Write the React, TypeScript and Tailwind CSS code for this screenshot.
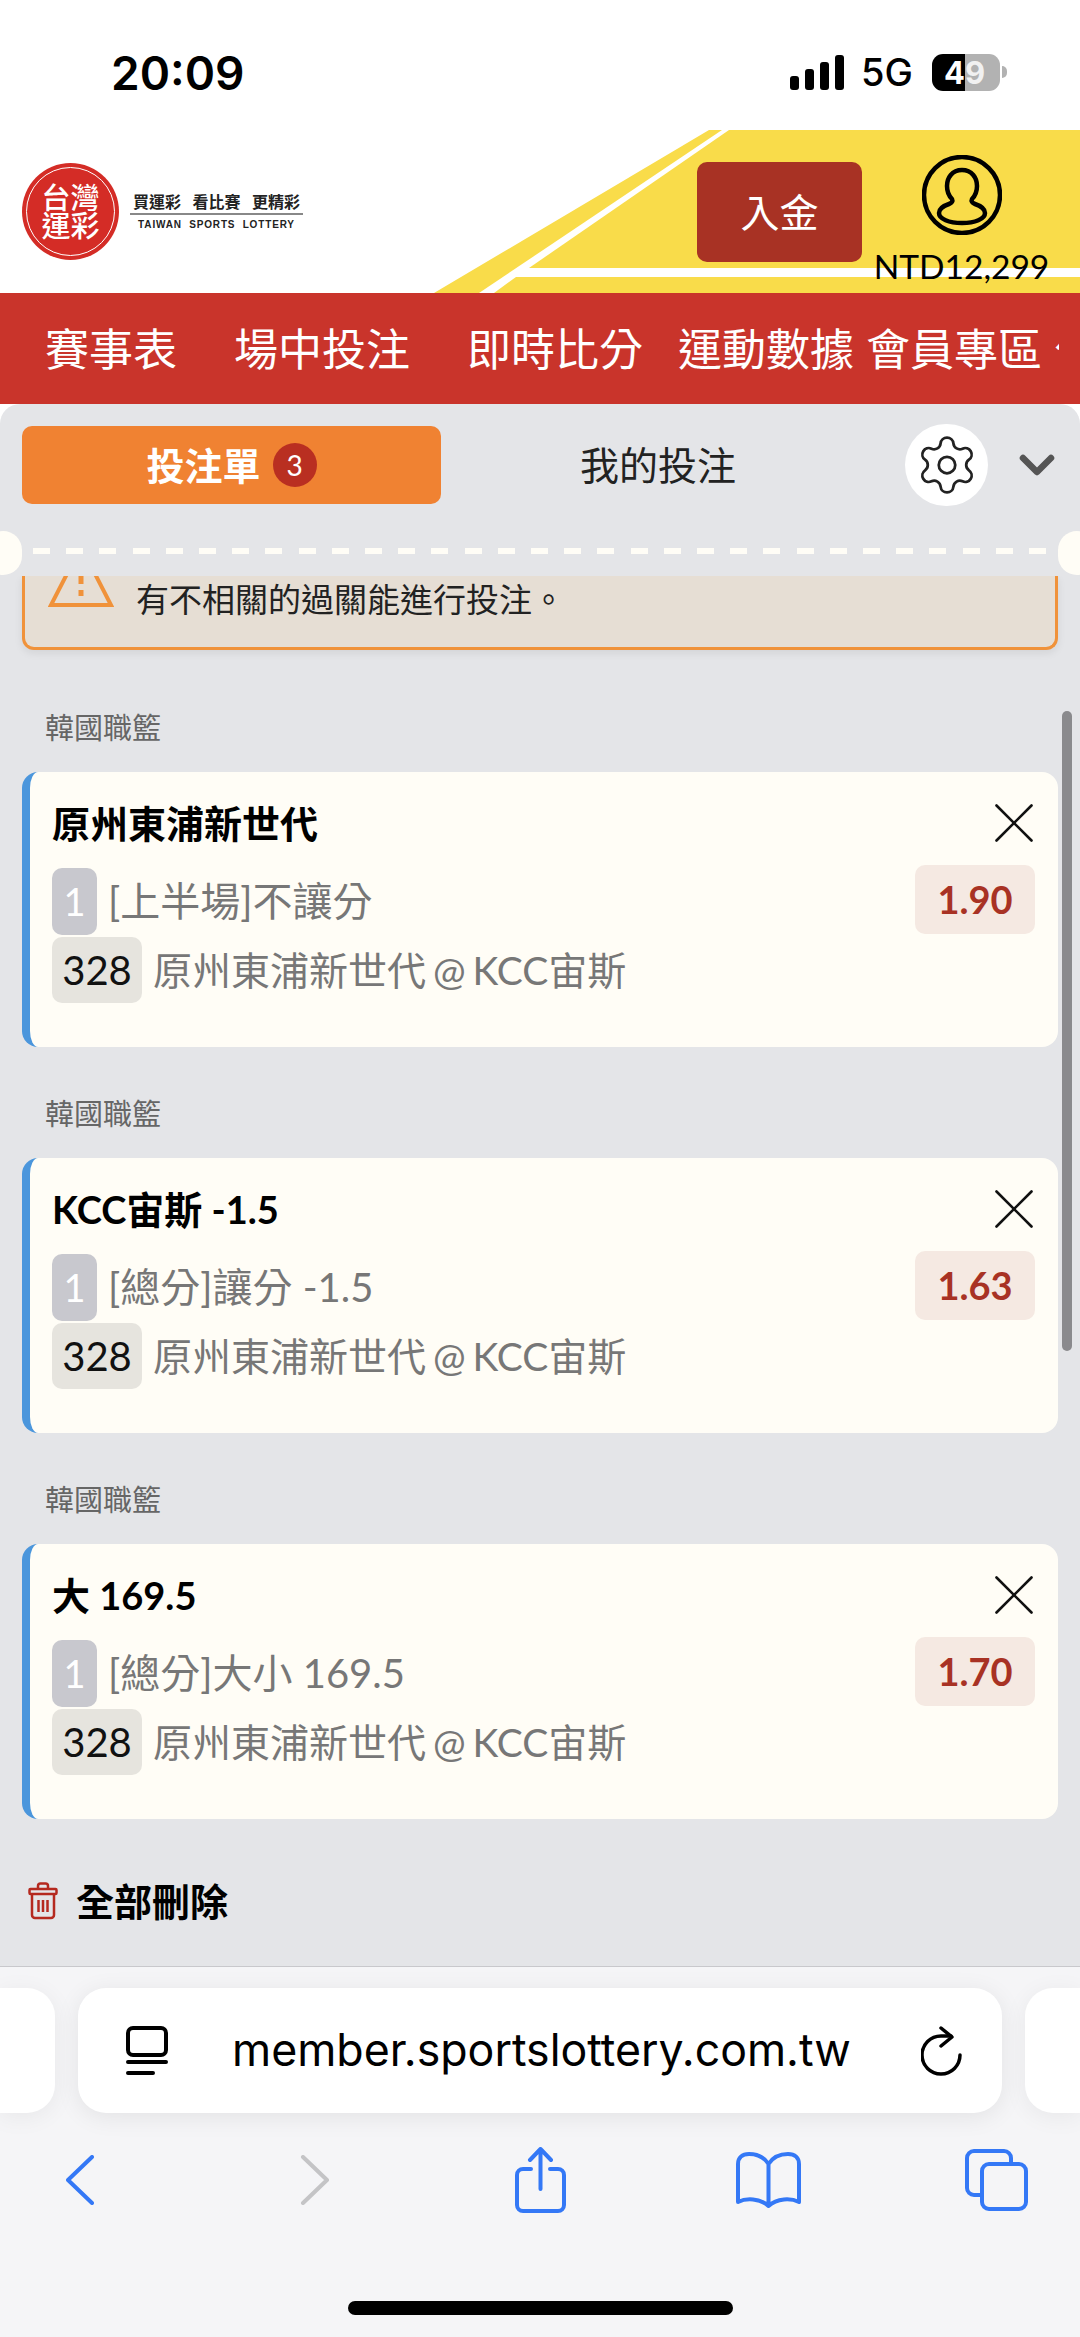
import { ChevronDown, Settings, X } from "lucide-react";

const bets = [
  { title: "原州東浦新世代", market: "[上半場]不讓分", odds: "1.90" },
  { title: "KCC宙斯 -1.5", market: "[總分]讓分 -1.5", odds: "1.63" },
  { title: "大 169.5", market: "[總分]大小 169.5", odds: "1.70" },
];

function StatusBar() {
  return (
    <div className="relative flex h-[130px] items-start bg-white pt-[46px]">
      <span className="ml-[111px] text-[46px] leading-[54px] font-semibold text-black [font-family:Inter,sans-serif]">
        20:09
      </span>
      <div className="ml-auto mr-[73px] flex items-center pt-[7px]">
        <div className="flex items-end gap-[6px]">
          <div className="h-[14px] w-[9px] rounded-[3px] bg-black" />
          <div className="h-[21px] w-[9px] rounded-[3px] bg-black" />
          <div className="h-[28px] w-[9px] rounded-[3px] bg-black" />
          <div className="h-[35px] w-[9px] rounded-[3px] bg-black" />
        </div>
        <span className="ml-[17px] text-[38px] leading-[38px] font-medium text-black [font-family:Inter,sans-serif]">
          5G
        </span>
        <div className="ml-[19px] flex h-[37px] w-[68px] overflow-hidden rounded-[11px] text-[31px] leading-[37px] font-bold text-white [font-family:Inter,sans-serif]">
          <div className="w-[33px] bg-black pl-[12px]">4</div>
          <div className="w-[35px] bg-[#b2b2b2] text-[#f1f1f1]">9</div>
        </div>
        <div className="ml-[2px] h-[12px] w-[5px] rounded-r-full bg-[#b2b2b2]" />
      </div>
    </div>
  );
}

function Logo() {
  return (
    <div className="flex items-center">
      <div className="flex h-[97px] w-[97px] items-center justify-center rounded-full bg-[#d42c26] p-[4px]">
        <div className="flex h-full w-full flex-col items-center justify-center rounded-full border border-white text-[29px] leading-[28px] font-medium text-white">
          <span>台灣</span>
          <span>運彩</span>
        </div>
      </div>
      <div className="ml-[11px] flex w-[173px] flex-col items-center text-[#222]">
        <span className="flex w-full justify-between px-[3px] text-[16px] leading-[22px] font-bold">
          <span>買運彩</span>
          <span>看比賽</span>
          <span>更精彩</span>
        </span>
        <div className="h-[2px] w-full bg-[#888]" />
        <span className="mt-[3px] text-[10px] leading-[14px] font-bold tracking-[0.85px] whitespace-pre [font-family:'Liberation_Sans',sans-serif]">
          TAIWAN  SPORTS  LOTTERY
        </span>
      </div>
    </div>
  );
}

function Header() {
  return (
    <div className="relative flex h-[163px] bg-white pl-[22px]">
      <svg className="absolute inset-0" width="1080" height="163" viewBox="0 0 1080 163">
        <polygon points="709,0 722,0 479,163 434,163" fill="#f9dc4a" />
        <polygon points="729,0 1080,0 1080,138 529,138" fill="#f9dc4a" />
        <polygon points="516,147 1080,147 1080,163 494,163" fill="#f9dc4a" />
      </svg>
      <div className="relative mt-[33px] self-start">
        <Logo />
      </div>
      <div className="relative ml-auto mr-[33px] flex items-start pt-[32px]">
        <div className="flex h-[100px] w-[165px] items-center justify-center rounded-[10px] bg-[#a83224] text-[39px] text-white">
          入金
        </div>
        <div className="ml-[14px] -mt-[7px] flex w-[171px] flex-col items-center">
          <svg width="80" height="80" viewBox="0 0 80 80" fill="none" stroke="#000" strokeWidth="4.5">
            <circle cx="40" cy="40" r="38" />
            <path d="M40 15c-10 0-15 8-15 16 0 6 2 10 5 13 1 2 0 4-3 5-6 2-10 5-10 9 0 6 10 10 23 10s23-4 23-10c0-4-4-7-10-9-3-1-4-3-3-5 3-3 5-7 5-13 0-8-5-16-15-16z" />
          </svg>
          <span className="mt-[11px] text-[33.500px] leading-[40px] text-black">NTD12,299</span>
        </div>
      </div>
    </div>
  );
}

function Nav() {
  return (
    <div className="flex h-[111px] items-center overflow-hidden bg-[#c9342b] pl-[45px] text-[44px] whitespace-nowrap text-white">
      <span className="w-[189px] shrink-0">賽事表</span>
      <span className="w-[233px] shrink-0">場中投注</span>
      <span className="w-[211px] shrink-0">即時比分</span>
      <span className="w-[188px] shrink-0">運動數據</span>
      <span className="w-[188px] shrink-0">會員專區</span>
      <span className="w-[5px] shrink-0 overflow-hidden">公告</span>
    </div>
  );
}

function BetCard({ title, market, odds }: { title: string; market: string; odds: string }) {
  return (
    <div className="mt-[26px] h-[275px] rounded-[16px] border-l-[8px] border-[#4b96dc] bg-[#fffdf6] pt-[30px] pl-[22px] pr-[23px]">
      <div className="flex h-[42px] items-center justify-between">
        <span className="text-[38px] leading-[42px] font-bold text-black">{title}</span>
        <X className="-my-[14px] -mr-[14px] h-[70px] w-[70px]" strokeWidth={0.9} color="#111" />
      </div>
      <div className="mt-[23px] flex items-start">
        <span className="mt-[1px] flex h-[67px] w-[45px] items-center justify-center rounded-[10px] bg-[#c8c8ce] text-[38px] text-white">1</span>
        <span className="mt-[6px] ml-[11px] text-[40px] leading-[56px] text-[#777]">{market}</span>
        <span className="ml-auto -mt-[2px] flex h-[69px] w-[120px] items-center justify-center rounded-[10px] bg-[#f5e9e2] text-[38px] font-bold text-[#a83224]">
          {odds}
        </span>
      </div>
      <div className="mt-[2px] flex items-center">
        <span className="flex h-[66px] w-[90px] items-center justify-center rounded-[10px] bg-[#e6e4de] text-[40px] text-[#111]">328</span>
        <span className="ml-[11px] text-[39px] leading-[56px] text-[#777] [word-spacing:-3px]">原州東浦新世代 @ KCC宙斯</span>
      </div>
    </div>
  );
}

function BetSlipTop() {
  return (
    <div className="relative z-10 h-[172px] shrink-0 rounded-t-[20px] bg-[#e4e5e8]">
      <div className="flex items-center pt-[20px] pl-[22px]">
        <div className="flex h-[78px] w-[419px] items-center justify-center rounded-[10px] bg-[#f08232] text-[38px] font-bold text-white">
          投注單
          <span className="ml-[12px] flex h-[44px] w-[44px] items-center justify-center rounded-full bg-[#b92f21] text-[28px] font-normal">3</span>
        </div>
        <span className="ml-[139px] text-[39px] text-[#222]">我的投注</span>
        <div className="ml-[169px] flex h-[82px] w-[83px] items-center justify-center rounded-full bg-white">
          <Settings className="h-[66px] w-[66px] shrink-0" strokeWidth={1} color="#222" />
        </div>
        <ChevronDown className="ml-[21px] h-[56px] w-[56px] shrink-0" strokeWidth={2.8} color="#555" />
      </div>
      <div className="absolute top-[127px] left-[-16px] h-[44px] w-[38px] rounded-full bg-[#fffdf6]" />
      <div className="absolute top-[127px] right-[-16px] h-[44px] w-[38px] rounded-full bg-[#fffdf6]" />
      <div className="absolute top-[144px] left-[33px] right-[33px] h-[6px] bg-[repeating-linear-gradient(90deg,#fffdf6_0,#fffdf6_17px,transparent_17px,transparent_33.2px)]" />
    </div>
  );
}

function BetSlipBody() {
  return (
    <div className="relative flex-1 overflow-hidden bg-[#e4e5e8] px-[22px]">
      <div className="absolute top-[135px] right-[8px] h-[640px] w-[10px] rounded-full bg-[#8a8a8d]" />
      <div className="flex h-[74px] rounded-b-[12px] border-x-[3px] border-b-[3px] border-[#f0923a] bg-[#e6ded4] pl-[23px] shadow-[0_3px_8px_rgba(0,0,0,0.08)]">
        <svg width="66" height="31" viewBox="0 0 66 31" fill="none" stroke="#f0923a" strokeWidth="4">
          <path d="M21 -6 L3 29 H63 L45 -6" />
          <path d="M33 0 V8 M33 14 V20" strokeWidth="5" />
        </svg>
        <span className="ml-[22px] mt-[1px] text-[33px] leading-[44px] text-[#222]">有不相關的過關能進行投注。</span>
      </div>
      <div className="mt-[60px]">
        {bets.map((bet, i) => (
          <div key={i} className={i > 0 ? "mt-[49px]" : ""}>
            <div className="pl-[23px] text-[29px] leading-[36px] text-[#666]">韓國職籃</div>
            <BetCard {...bet} />
          </div>
        ))}
      </div>
      <div className="mt-[60px] flex items-center pl-[6px]">
        <svg width="30" height="38" viewBox="0 0 30 38" fill="none" stroke="#b5291f" strokeWidth="2.500" strokeLinejoin="round">
          <path d="M10 7V4a2.500 2.500 0 0 1 2.500-2.500h5A2.500 2.500 0 0 1 20 4v3" />
          <rect x="1.500" y="7" width="27" height="5" rx="1" />
          <path d="M4 12v21a3 3 0 0 0 3 3h16a3 3 0 0 0 3-3V12" />
          <path d="M10.500 18v12M15 18v12M19.500 18v12" />
        </svg>
        <span className="ml-[18px] text-[38px] leading-[44px] font-bold text-black">全部刪除</span>
      </div>
    </div>
  );
}

function SafariBar() {
  return (
    <div className="h-[371px] shrink-0 border-t border-[#c8c8cc] bg-[#f5f5f7]">
      <div className="mt-[21px] flex h-[125px] items-stretch">
        <div className="w-[55px] shrink-0 rounded-r-[28px] bg-white shadow-[0_4px_24px_rgba(0,0,0,0.06)]" />
        <div className="ml-[23px] flex w-[924px] shrink-0 items-center rounded-[28px] bg-white pl-[48px] shadow-[0_4px_24px_rgba(0,0,0,0.08)]">
          <svg width="42" height="50" viewBox="0 0 42 50" fill="none" stroke="#000" strokeWidth="4" strokeLinecap="round">
            <rect x="2" y="2" width="38" height="27" rx="5" />
            <path d="M2 36H40M2 47H27" />
          </svg>
          <span className="ml-[64px] w-[689px] shrink-0 text-[44.700px] whitespace-nowrap text-black [font-family:Inter,sans-serif]">
            member.sportslottery.com.tw
          </span>
          <svg width="42" height="50" viewBox="0 0 42 50" fill="none" stroke="#000" strokeWidth="3.500" strokeLinecap="round" strokeLinejoin="round">
            <path d="M39 29A19 19 0 1 1 20 10H30" />
            <path d="M20 2l11 9-11 9" />
          </svg>
        </div>
        <div className="ml-[23px] flex-1 rounded-l-[28px] bg-white shadow-[0_4px_24px_rgba(0,0,0,0.06)]" />
      </div>
      <div className="mt-[34px] flex h-[66px] items-center pl-[66px]">
        <svg width="28" height="50" viewBox="0 0 28 50" fill="none" stroke="#3478f6" strokeWidth="4" strokeLinecap="round" strokeLinejoin="round">
          <path d="M26 2L2 25l24 23" />
        </svg>
        <svg className="ml-[206px]" width="30" height="50" viewBox="0 0 30 50" fill="none" stroke="#c4c4c6" strokeWidth="4" strokeLinecap="round" strokeLinejoin="round">
          <path d="M3 2l24 23L3 48" />
        </svg>
        <svg className="ml-[185px]" width="51" height="66" viewBox="0 0 51 66" fill="none" stroke="#3478f6" strokeWidth="4" strokeLinecap="round" strokeLinejoin="round">
          <path d="M16 22H8a6 6 0 0 0-6 6v30a6 6 0 0 0 6 6h35a6 6 0 0 0 6-6V28a6 6 0 0 0-6-6h-8" />
          <path d="M25.500 42V3M15 13L25.500 2 36 13" />
        </svg>
        <svg className="ml-[170px]" width="65" height="56" viewBox="0 0 65 56" fill="none" stroke="#3478f6" strokeWidth="4" strokeLinecap="round" strokeLinejoin="round">
          <path d="M32.500 12C28 5 20 2 13 2 6 2 2 6 2 12v38c8-4 22-4 30.500 4C41 46 55 46 63 50V12c0-6-4-10-11-10-7 0-15 3-19.500 10zM32.500 12v42" />
        </svg>
        <svg className="ml-[164px]" width="63" height="62" viewBox="0 0 63 62" fill="none" stroke="#3478f6" strokeWidth="4" strokeLinejoin="round">
          <path d="M15 46H9a7 7 0 0 1-7-7V9a7 7 0 0 1 7-7h30a7 7 0 0 1 7 7v5" />
          <rect x="17" y="15" width="44" height="45" rx="7" />
        </svg>
      </div>
      <div className="mx-auto mt-[88px] h-[14px] w-[385px] rounded-full bg-black" />
    </div>
  );
}

export default function App() {
  return (
    <div className="flex h-[2337px] w-[1080px] flex-col overflow-hidden bg-white [font-family:Lato,'Noto_Sans_CJK_TC',sans-serif]">
      <StatusBar />
      <Header />
      <Nav />
      <BetSlipTop />
      <BetSlipBody />
      <SafariBar />
    </div>
  );
}
